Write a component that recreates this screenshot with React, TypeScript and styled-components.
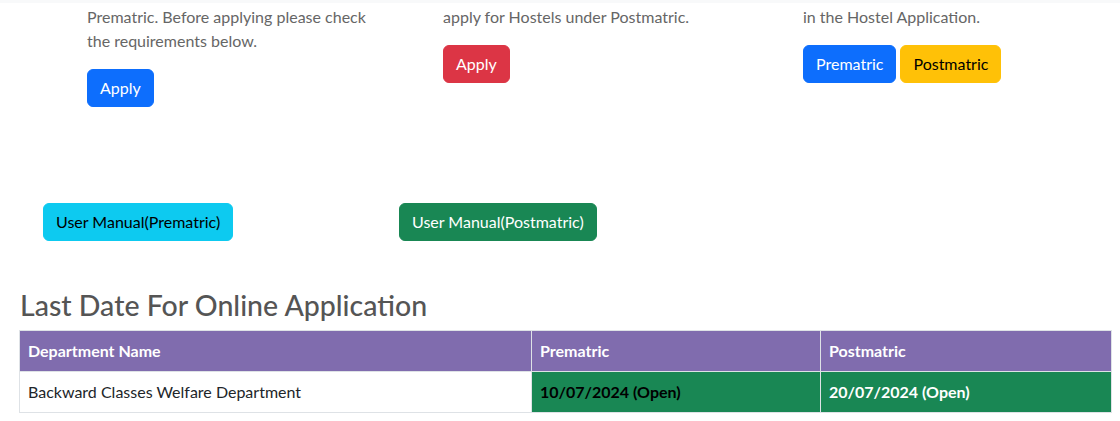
import React from "react";
import styled, { createGlobalStyle } from "styled-components";

const GlobalStyle = createGlobalStyle`
  body {
    margin: 0;
    background: #ffffff;
    font-family: "Lato", "Open Sans", sans-serif;
    font-size: 16px;
    line-height: 1.5;
    color: #212529;
  }
  * {
    box-sizing: border-box;
  }
`;

type Variant = "primary" | "danger" | "warning" | "info" | "success";

const variants: Record<Variant, { bg: string; fg: string }> = {
  primary: { bg: "#0d6efd", fg: "#ffffff" },
  danger: { bg: "#dc3545", fg: "#ffffff" },
  warning: { bg: "#ffc107", fg: "#000000" },
  info: { bg: "#0dcaf0", fg: "#000000" },
  success: { bg: "#198754", fg: "#ffffff" },
};

const TopStrip = styled.div`
  height: 3px;
  background: #f8f9fa;
`;

const Features = styled.section`
  display: grid;
  grid-template-columns: 356px 360px 1fr;
  padding: 2px 0 0 87px;
`;

const Feature = styled.div`
  display: flex;
  flex-direction: column;
  align-items: flex-start;
`;

const FeatureText = styled.p`
  margin: 0 0 16px;
  color: #666666;
  font-size: 16px;
  line-height: 24px;
`;

const ButtonRow = styled.div`
  display: flex;
  gap: 4px;
`;

const Button = styled.button<{ $variant: Variant }>`
  display: inline-block;
  padding: 6px 12px;
  border: 1px solid ${(p) => variants[p.$variant].bg};
  border-radius: 6px;
  background: ${(p) => variants[p.$variant].bg};
  color: ${(p) => variants[p.$variant].fg};
  font-family: inherit;
  font-size: 16px;
  line-height: 24px;
  cursor: pointer;
`;

const Manuals = styled.section`
  display: grid;
  grid-template-columns: 356px 1fr;
  justify-items: start;
  padding: 96px 0 0 43px;
`;

const Heading = styled.h3`
  margin: 47px 0 8px 20px;
  font-size: 28.5px;
  font-weight: 500;
  line-height: 1.2;
  color: #555555;
`;

const TableWrap = styled.div`
  padding: 0 9px 0 19px;
`;

const Table = styled.table`
  width: 1092px;
  border-collapse: collapse;
  table-layout: fixed;
`;

const HeadCell = styled.th<{ $width: number }>`
  width: ${(p) => p.$width}px;
  padding: 8px;
  border: 1px solid #dee2e6;
  background: #806cae;
  color: #ffffff;
  font-weight: 700;
  text-align: left;
  line-height: 24px;
`;

const Cell = styled.td<{ $open?: boolean; $light?: boolean }>`
  padding: 8px;
  border: 1px solid #dee2e6;
  background: ${(p) => (p.$open ? "#198754" : "#ffffff")};
  color: ${(p) => (p.$open ? (p.$light ? "#ffffff" : "#000000") : "#212529")};
  font-weight: ${(p) => (p.$open ? 700 : 400)};
  line-height: 24px;
`;

export default function App() {
  return (
    <>
      <GlobalStyle />
      <TopStrip />
      <Features>
        <Feature>
          <FeatureText>
            Prematric. Before applying please check
            <br />
            the requirements below.
          </FeatureText>
          <Button $variant="primary">Apply</Button>
        </Feature>
        <Feature>
          <FeatureText>apply for Hostels under Postmatric.</FeatureText>
          <Button $variant="danger">Apply</Button>
        </Feature>
        <Feature>
          <FeatureText>in the Hostel Application.</FeatureText>
          <ButtonRow>
            <Button $variant="primary">Prematric</Button>
            <Button $variant="warning">Postmatric</Button>
          </ButtonRow>
        </Feature>
      </Features>

      <Manuals>
        <Button $variant="info">User Manual(Prematric)</Button>
        <Button $variant="success">User Manual(Postmatric)</Button>
      </Manuals>

      <Heading>Last Date For Online Application</Heading>
      <TableWrap>
        <Table>
          <thead>
            <tr>
              <HeadCell $width={512}>Department Name</HeadCell>
              <HeadCell $width={289}>Prematric</HeadCell>
              <HeadCell $width={291}>Postmatric</HeadCell>
            </tr>
          </thead>
          <tbody>
            <tr>
              <Cell>Backward Classes Welfare Department</Cell>
              <Cell $open>10/07/2024 (Open)</Cell>
              <Cell $open $light>
                20/07/2024 (Open)
              </Cell>
            </tr>
          </tbody>
        </Table>
      </TableWrap>
    </>
  );
}
